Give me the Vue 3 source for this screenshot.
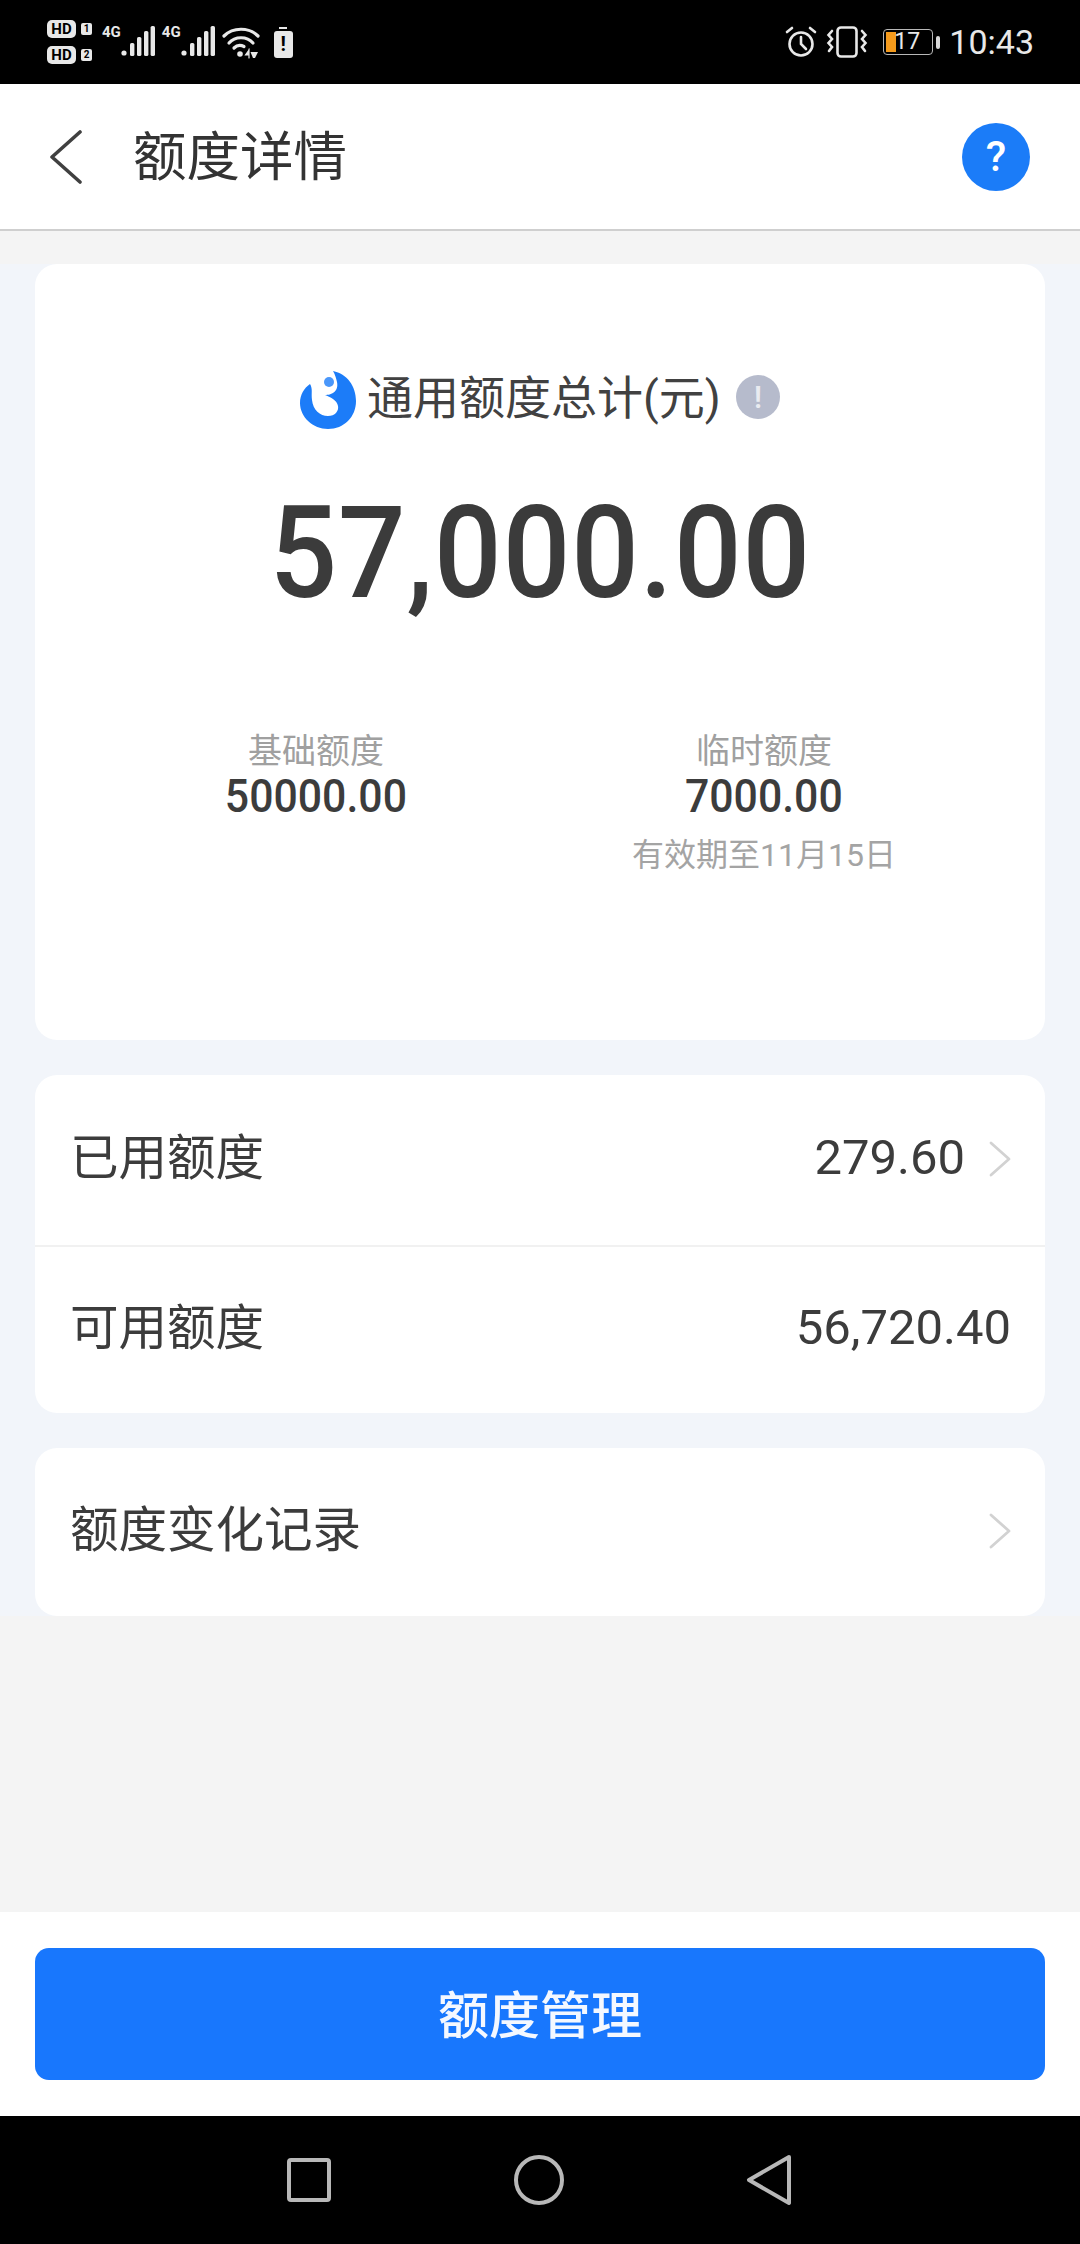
<template>
  <div class="screen">
    <div class="status-bar">
      <div class="status-left">
        <div class="hd-stack">
          <div class="hd-row"><span class="hd">HD</span><span class="sim">1</span></div>
          <div class="hd-row"><span class="hd">HD</span><span class="sim">2</span></div>
        </div>
        <div v-for="n in 2" :key="n" class="signal">
          <span class="net">4G</span>
          <svg width="34" height="32" viewBox="0 0 34 32" fill="#e8e8e8">
            <circle cx="3" cy="27" r="2.6" />
            <rect x="9" y="17" width="4.4" height="13" rx="1.6" />
            <rect x="16" y="11" width="4.4" height="19" rx="1.6" />
            <rect x="23" y="5" width="4.4" height="25" rx="1.6" />
            <rect x="29.6" y="0" width="4.4" height="30" rx="1.6" />
          </svg>
        </div>
        <svg class="wifi" width="38" height="34" viewBox="0 0 38 34" fill="none" stroke="#e8e8e8" stroke-width="3.2" stroke-linecap="round">
          <path d="M2 11 C11 2 27 2 36 11" />
          <path d="M7 18 C13 11 25 11 31 18" />
          <path d="M12 23 C15 20 19 20 22 21.500" />
          <circle cx="18" cy="29" r="2.800" fill="#e8e8e8" stroke="none" />
          <path d="M27 25 L23.500 30 L27 30 Z M27 24 L27 33" stroke-width="1.200" fill="#e8e8e8" />
          <path d="M31 33 L28.500 27 L36 27 L33 33 Z" stroke="none" fill="#e8e8e8" />
        </svg>
        <div class="bat-alert">
          <span class="bat-cap"></span>
          <span class="bat-body">!</span>
        </div>
      </div>
      <div class="status-right">
        <svg width="32" height="32" viewBox="0 0 32 32" fill="none" stroke="#e8e8e8" stroke-width="2.600" stroke-linecap="round">
          <circle cx="16" cy="18" r="11.500" />
          <path d="M16 11 L16 18 L21 23" />
          <path d="M2 6 L7 2 M30 6 L25 2" />
        </svg>
        <svg width="42" height="32" viewBox="0 0 42 32" fill="none" stroke="#e8e8e8" stroke-width="2.600" stroke-linecap="round">
          <rect x="11.500" y="1.500" width="19" height="29" rx="3.500" />
          <path d="M6 5 L2.500 9 L6 13 L2.500 17 L6 21 L3 25" />
          <path d="M36 5 L39.500 9 L36 13 L39.500 17 L36 21 L39 25" />
        </svg>
        <div class="battery">
          <div class="battery-shell">
            <span class="battery-fill"></span>
            <span class="battery-num">17</span>
          </div>
          <span class="battery-tip"></span>
        </div>
        <span class="clock">10:43</span>
      </div>
    </div>

    <header class="nav">
      <svg class="back" width="34" height="54" viewBox="0 0 34 54" fill="none" stroke="#404040" stroke-width="3.600" stroke-linecap="round" stroke-linejoin="round">
        <path d="M31 2 L3 27 L31 52" />
      </svg>
      <h1 class="nav-title">额度详情</h1>
      <span class="help">?</span>
    </header>

    <main class="content">
      <div class="cards">
        <section class="card total-card">
          <div class="total-head">
            <svg class="brand" width="56" height="58" viewBox="0 0 56 58">
              <path fill="#1c7cf8" d="M33 0 C47 3 56 15 56 30 C56 46 44 58 28 58 C13 58 0 46 0 32 C0 24 4 17 10 13 C13 18 11 22 12 29 C13 39 20 45 28 45 C35 45 39 40 38 35 C37 29 30 26 25 24 C31 24 39 21 37 11 C36 7 35 3 33 0 Z" />
              <circle cx="29" cy="11" r="5" fill="#4a97fa" />
            </svg>
            <span class="total-label">通用额度总计(元)</span>
            <span class="info">!</span>
          </div>
          <div class="total-amount">57,000.00</div>
          <div class="split">
            <div class="split-item">
              <span class="split-label">基础额度</span>
              <span class="split-value">50000.00</span>
            </div>
            <div class="split-item">
              <span class="split-label">临时额度</span>
              <span class="split-value">7000.00</span>
              <span class="split-note">有效期至11月15日</span>
            </div>
          </div>
        </section>

        <section class="card list-card">
          <div class="row row-used">
            <span class="row-label">已用额度</span>
            <span class="row-value">279.60</span>
            <svg class="chevron" width="22" height="36" viewBox="0 0 22 36" fill="none" stroke="#d2d2d2" stroke-width="2.800" stroke-linecap="round" stroke-linejoin="round"><path d="M2 2 L20 18 L2 34" /></svg>
          </div>
          <div class="row row-line">
            <span class="row-label">可用额度</span>
            <span class="row-value">56,720.40</span>
          </div>
        </section>

        <section class="card list-card">
          <div class="row">
            <span class="row-label">额度变化记录</span>
            <svg class="chevron" width="22" height="36" viewBox="0 0 22 36" fill="none" stroke="#d2d2d2" stroke-width="2.800" stroke-linecap="round" stroke-linejoin="round"><path d="M2 2 L20 18 L2 34" /></svg>
          </div>
        </section>
      </div>
    </main>

    <footer class="action-bar">
      <button class="manage-btn">额度管理</button>
    </footer>

    <nav class="system-nav">
      <span class="sys-square"></span>
      <span class="sys-circle"></span>
      <svg width="46" height="52" viewBox="0 0 46 52" fill="none" stroke="#b8b8b8" stroke-width="4" stroke-linejoin="round"><path d="M43 3 L3 26 L43 49 Z" /></svg>
    </nav>
  </div>
</template>

<script setup>
</script>

<style>
html, body {
  margin: 0;
  background: #f4f4f4;
}
</style>

<style scoped>
.screen {
  width: 1080px;
  height: 2244px;
  display: flex;
  flex-direction: column;
  background: #f4f4f4;
  font-family: Roboto, "Noto Sans CJK SC", sans-serif;
  color: #3c3c3c;
  overflow: hidden;
}

.status-bar {
  height: 84px;
  flex-shrink: 0;
  background: #000;
  display: flex;
  justify-content: space-between;
  align-items: center;
  padding: 0 46px 0 47px;
  box-sizing: border-box;
}

.status-left,
.status-right {
  display: flex;
  align-items: center;
}

.status-left {
  gap: 7px;
}

.status-right {
  gap: 9px;
}

.hd-stack {
  display: flex;
  flex-direction: column;
  gap: 8px;
  margin-right: 3px;
}

.hd-row {
  display: flex;
  align-items: center;
  gap: 5px;
}

.hd {
  width: 29px;
  height: 18px;
  background: #e8e8e8;
  color: #000;
  border-radius: 5px;
  font-size: 15px;
  line-height: 18px;
  font-weight: 700;
  text-align: center;
}

.sim {
  width: 11px;
  height: 12px;
  background: #e8e8e8;
  color: #000;
  border-radius: 2px;
  font-size: 10px;
  line-height: 12px;
  font-weight: 700;
  text-align: center;
}

.signal {
  display: flex;
  align-items: flex-end;
  height: 32px;
}

.net {
  align-self: flex-start;
  margin-top: -1px;
  margin-right: -14px;
  color: #e8e8e8;
  font-size: 15px;
  line-height: 15px;
  font-weight: 700;
}

.signal svg {
  margin-left: 14px;
}

.bat-alert {
  display: flex;
  flex-direction: column;
  align-items: center;
  gap: 2px;
  margin-left: 7px;
}

.bat-cap {
  width: 8px;
  height: 2px;
  background: #e8e8e8;
}

.bat-body {
  width: 19px;
  height: 27px;
  background: #e8e8e8;
  color: #000;
  border-radius: 3px;
  font-size: 20px;
  line-height: 27px;
  font-weight: 700;
  text-align: center;
}

.battery {
  display: flex;
  align-items: center;
  gap: 3px;
  margin-left: 6px;
}

.battery-shell {
  position: relative;
  width: 50px;
  height: 26px;
  box-sizing: border-box;
  border: 1.500px solid #b8b8b8;
  border-radius: 4px;
}

.battery-fill {
  position: absolute;
  left: 2px;
  top: 2px;
  bottom: 2px;
  width: 10px;
  background: #f49a1c;
}

.battery-num {
  position: absolute;
  left: 10px;
  top: 0;
  color: #e8e8e8;
  font-size: 23px;
  line-height: 23px;
}

.battery-tip {
  width: 4px;
  height: 13px;
  background: #d8d8d8;
  border-radius: 2px;
}

.clock {
  margin-left: 0;
  color: #e8e8e8;
  font-size: 34px;
  line-height: 36px;
}

.nav {
  height: 147px;
  flex-shrink: 0;
  display: flex;
  align-items: center;
  background: #fff;
  border-bottom: 2px solid #cfcfcf;
  box-sizing: border-box;
  padding: 0 50px 0 49px;
}

.nav-title {
  margin: 0 0 8px 50px;
  flex: 1;
  font-size: 53.500px;
  font-weight: 400;
  color: #333;
}

.help {
  width: 68px;
  height: 68px;
  border-radius: 50%;
  background: #1b7cf8;
  color: #fff;
  font-size: 42px;
  font-weight: 500;
  line-height: 68px;
  text-align: center;
}

.content {
  flex: 1;
  padding-top: 33px;
}

.cards {
  display: flex;
  flex-direction: column;
  gap: 35px;
  padding: 0 35px;
  background: #f2f5fa;
}

.card {
  background: #fff;
  border-radius: 22px;
}

.total-card {
  height: 776px;
  display: flex;
  flex-direction: column;
  align-items: center;
  padding-top: 108px;
  box-sizing: border-box;
}

.total-head {
  display: flex;
  align-items: center;
  height: 56px;
}

.brand {
  margin-right: 11px;
}

.total-label {
  margin-top: -5px;
  font-size: 46px;
  line-height: 56px;
  color: #414141;
}

.info {
  width: 44px;
  height: 44px;
  margin-left: 15px;
  margin-top: -6px;
  border-radius: 50%;
  background: #b6bbcc;
  color: #e9ebf0;
  font-size: 32px;
  font-weight: 500;
  line-height: 44px;
  text-align: center;
}

.total-amount {
  margin-top: 50px;
  font-size: 128px;
  line-height: 150px;
  font-weight: 500;
  color: #3b3b3b;
  letter-spacing: 1px;
  transform: scaleX(0.93);
}

.split {
  display: flex;
  align-self: stretch;
  margin-top: 103px;
  padding: 0 151px;
  justify-content: space-between;
}

.split-item {
  display: flex;
  flex-direction: column;
  align-items: center;
  width: 260px;
}

.split-label {
  font-size: 34px;
  line-height: 40px;
  color: #a0a0a0;
}

.split-value {
  font-size: 46px;
  line-height: 50px;
  font-weight: 500;
  color: #3c3c3c;
  transform: scaleX(0.93);
}

.split-note {
  margin-top: 14px;
  font-size: 32px;
  line-height: 40px;
  color: #a4a4a4;
  white-space: nowrap;
}

.list-card {
  display: flex;
  flex-direction: column;
}

.row {
  height: 168px;
  display: flex;
  align-items: center;
  padding: 0 34px 0 35px;
}

.row-used {
  height: 170px;
}

.row-line {
  height: 166px;
  border-top: 2px solid #f1f1f1;
}

.row-label {
  flex: 1;
  margin-bottom: 13px;
  font-size: 48.500px;
  color: #3c3c3c;
}

.row-value {
  margin-bottom: 5px;
  font-size: 49px;
  color: #3c3c3c;
}

.row .chevron {
  margin-left: 24px;
  margin-bottom: 2px;
}

.action-bar {
  height: 204px;
  flex-shrink: 0;
  background: #fff;
  display: flex;
  align-items: center;
  padding: 0 35px;
  box-sizing: border-box;
}

.manage-btn {
  width: 100%;
  height: 132px;
  padding-bottom: 6px;
  border: none;
  border-radius: 14px;
  background: #1877fd;
  color: #f4f8ff;
  font-family: inherit;
  font-size: 51px;
  font-weight: 500;
}

.system-nav {
  height: 128px;
  flex-shrink: 0;
  background: #000;
  display: flex;
  align-items: center;
  padding: 0 288px 0 287px;
  justify-content: space-between;
  box-sizing: border-box;
}

.sys-square {
  width: 44px;
  height: 44px;
  box-sizing: border-box;
  border: 4px solid #b8b8b8;
  border-radius: 4px;
}

.sys-circle {
  width: 50px;
  height: 50px;
  box-sizing: border-box;
  border: 4px solid #b8b8b8;
  border-radius: 50%;
}
</style>
